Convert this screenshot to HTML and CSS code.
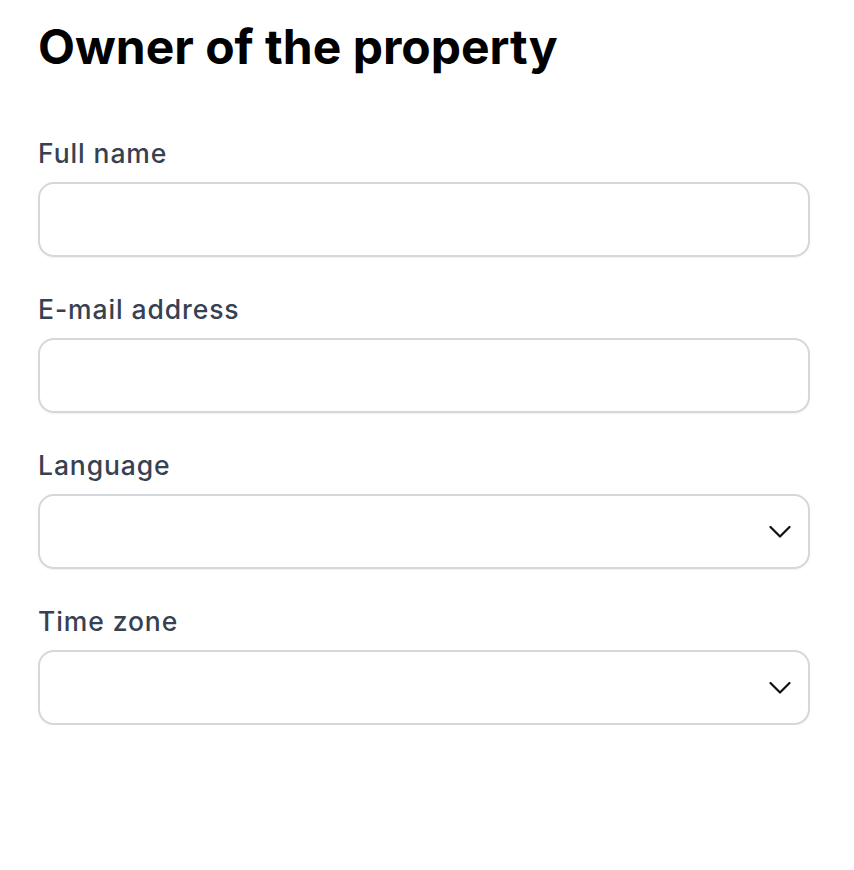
FILE: index.html
```html
<!DOCTYPE html>
<html lang="en">
<head>
<meta charset="utf-8">
<link rel="stylesheet" href="styles.css">
</head>
<body>
<main class="page">
  <h1 class="title">Owner of the property</h1>
  <form class="form">
    <div class="field">
      <label class="label" for="name">Full name</label>
      <input class="input" id="name" type="text">
    </div>
    <div class="field">
      <label class="label" for="email">E-mail address</label>
      <input class="input" id="email" type="email">
    </div>
    <div class="field">
      <label class="label" for="lang">Language</label>
      <div class="select">
        <select class="input" id="lang"><option></option></select>
        <svg class="chevron" viewBox="0 0 22 13" width="22" height="13"><path d="M1.5 1.5 L11 11 L20.5 1.5" fill="none" stroke="#111" stroke-width="2.2" stroke-linecap="round" stroke-linejoin="round"/></svg>
      </div>
    </div>
    <div class="field">
      <label class="label" for="tz">Time zone</label>
      <div class="select">
        <select class="input" id="tz"><option></option></select>
        <svg class="chevron" viewBox="0 0 22 13" width="22" height="13"><path d="M1.5 1.5 L11 11 L20.5 1.5" fill="none" stroke="#111" stroke-width="2.2" stroke-linecap="round" stroke-linejoin="round"/></svg>
      </div>
    </div>
  </form>
</main>
</body>
</html>
```

FILE: styles.css
```css
html, body {
  margin: 0;
  padding: 0;
  background: #fff;
}
body {
  font-family: Inter, "Noto Sans", sans-serif;
}
.page {
  padding: 18px 0 0 38px;
  width: 772px;
}
.title {
  margin: 0;
  font-size: 48px;
  line-height: 58px;
  font-weight: 700;
  color: #000;
  letter-spacing: 0;
}
.form {
  margin-top: 61px;
  display: flex;
  flex-direction: column;
  gap: 36px;
}
.field {
  display: flex;
  flex-direction: column;
  gap: 13px;
}
.label {
  font-size: 26.5px;
  line-height: 32px;
  font-weight: 500;
  color: #374151;
  letter-spacing: 0.9px;
}
.input {
  box-sizing: border-box;
  width: 100%;
  height: 75px;
  border: 2px solid #d4d7dc;
  border-radius: 16px;
  background: #fff;
  box-shadow: 0 1px 2px rgba(0,0,0,0.06);
  font: inherit;
  margin: 0;
  appearance: none;
  -webkit-appearance: none;
  outline: none;
}
.select {
  position: relative;
}
.chevron {
  position: absolute;
  right: 19px;
  top: 50%;
  transform: translateY(-50%);
}
```
